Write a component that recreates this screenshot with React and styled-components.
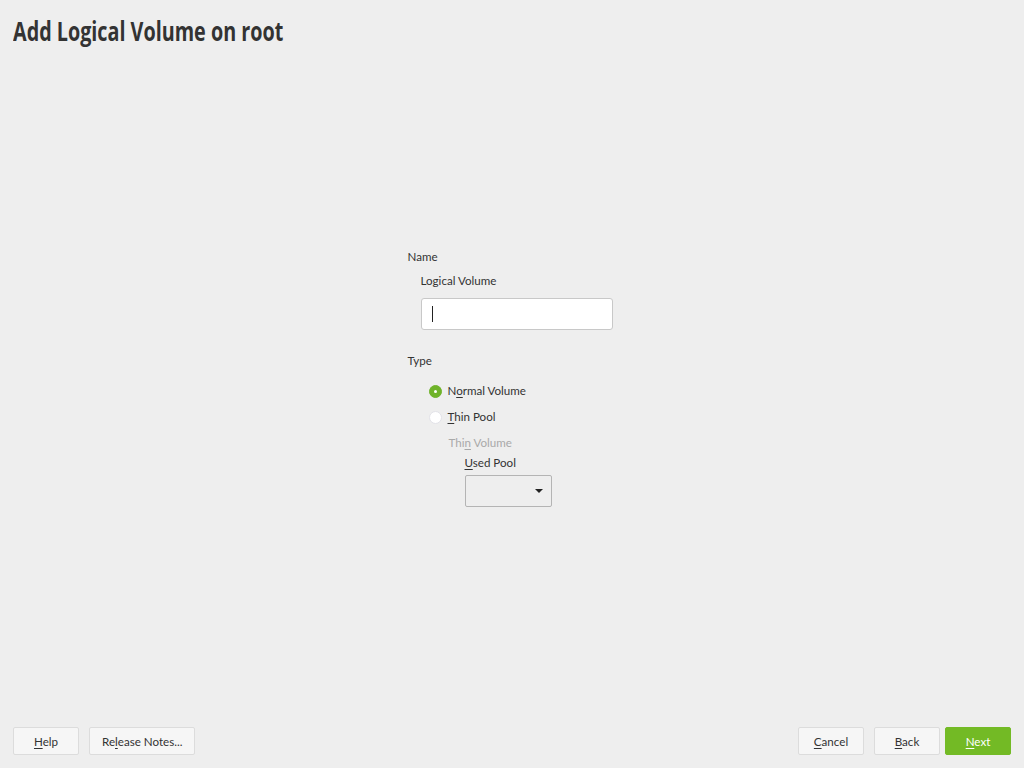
import React from 'react';
import styled, { createGlobalStyle } from 'styled-components';

const GlobalStyle = createGlobalStyle`
    html, body {
        margin: 0;
        padding: 0;
        background: #eeeeee;
    }
    body {
        font-family: Lato, "Open Sans", sans-serif;
        color: #333333;
    }
`

const Page = styled.div`
    width: 1024px;
    height: 768px;
    display: flex;
    flex-direction: column;
    background: #eeeeee;
    overflow: hidden;
`

const Title = styled.h1`
    margin: 15px 0 0 13px;
    padding: 0;
    font-family: "Open Sans", sans-serif;
    font-weight: 700;
    font-size: 26px;
    line-height: 32px;
    color: #333333;
    transform: scaleX(0.76);
    transform-origin: left center;
    white-space: nowrap;
`

const Main = styled.main`
    flex: 1;
    display: flex;
    justify-content: center;
    align-items: flex-start;
    padding-top: 202px;
    padding-right: 4px;
`

const Form = styled.div`
    width: 205px;
    display: flex;
    flex-direction: column;
    font-size: 11.6px;
`

const Label = styled.div`
    line-height: 16px;
    padding-left: ${p => p.indent || 0}px;
    margin-top: ${p => p.top || 0}px;
    color: ${p => (p.disabled ? '#a9a9a9' : '#333333')};
`

const Input = styled.div`
    margin: 9px 0 0 13px;
    height: 30px;
    background: #ffffff;
    border: 1px solid #c8c8c8;
    border-radius: 3px;
    display: flex;
    align-items: center;
    padding-left: 10px;
    box-sizing: content-box;
    width: 180px;
`

const Caret = styled.span`
    width: 1px;
    height: 16px;
    background: #222222;
`

const RadioRow = styled.label`
    display: flex;
    align-items: center;
    gap: 6px;
    margin-left: 21px;
    height: 16px;
    margin-top: ${p => p.top || 0}px;
    line-height: 16px;
`

const RadioDot = styled.span`
    width: 13px;
    height: 13px;
    border-radius: 50%;
    box-sizing: border-box;
    display: flex;
    align-items: center;
    justify-content: center;
    background: ${p => (p.checked ? '#6fb32a' : '#ffffff')};
    border: 1px solid ${p => (p.checked ? '#6fb32a' : '#e2e2e8')};

    &::after {
        content: '';
        width: 3px;
        height: 3px;
        border-radius: 50%;
        background: #ffffff;
        display: ${p => (p.checked ? 'block' : 'none')};
    }
`

const U = styled.span`
    text-decoration: underline;
    text-underline-offset: 2px;
`

const Combo = styled.div`
    margin: 4px 0 0 57px;
    width: 87px;
    height: 32px;
    box-sizing: border-box;
    border: 1px solid #b4b4b4;
    border-radius: 2px;
    background: #eeeeee;
    display: flex;
    align-items: center;
    justify-content: flex-end;
    padding-right: 8px;
`

const Arrow = styled.span`
    width: 0;
    height: 0;
    border-left: 4px solid transparent;
    border-right: 4px solid transparent;
    border-top: 4px solid #222222;
`

const Footer = styled.footer`
    display: flex;
    align-items: center;
    padding: 0 13px 13px 13px;
`

const Group = styled.div`
    display: flex;
    gap: ${p => p.gap || 10}px;
    margin-left: ${p => (p.right ? 'auto' : 0)};
`

const Button = styled.button`
    height: 28px;
    min-width: ${p => p.w}px;
    padding: 0 12px;
    font-family: Lato, "Open Sans", sans-serif;
    font-size: 11.6px;
    border-radius: 2px;
    cursor: pointer;
    border: 1px solid ${p => (p.primary ? '#73ba25' : '#dcdcdc')};
    background: ${p => (p.primary ? '#73ba25' : '#f6f6f6')};
    color: ${p => (p.primary ? '#ffffff' : '#333333')};
`

export default function App() {
    return (
        <Page>
            <GlobalStyle />
            <Title>Add Logical Volume on root</Title>
            <Main>
                <Form>
                    <Label>Name</Label>
                    <Label indent={13} top={8}>Logical Volume</Label>
                    <Input><Caret /></Input>
                    <Label top={23}>Type</Label>
                    <RadioRow top={14}>
                        <RadioDot checked />
                        <span>N<U>o</U>rmal Volume</span>
                    </RadioRow>
                    <RadioRow top={10}>
                        <RadioDot />
                        <span><U>T</U>hin Pool</span>
                    </RadioRow>
                    <Label indent={41} top={10} disabled>Thi<U>n</U> Volume</Label>
                    <Label indent={57} top={4}><U>U</U>sed Pool</Label>
                    <Combo><Arrow /></Combo>
                </Form>
            </Main>
            <Footer>
                <Group>
                    <Button w={66}><U>H</U>elp</Button>
                    <Button w={105}>Re<U>l</U>ease Notes...</Button>
                </Group>
                <Group right gap={10}>
                    <Button w={66}><U>C</U>ancel</Button>
                    <Button w={66}><U>B</U>ack</Button>
                    <Button w={66} primary style={{ marginLeft: -5 }}><U>N</U>ext</Button>
                </Group>
            </Footer>
        </Page>
    );
}
